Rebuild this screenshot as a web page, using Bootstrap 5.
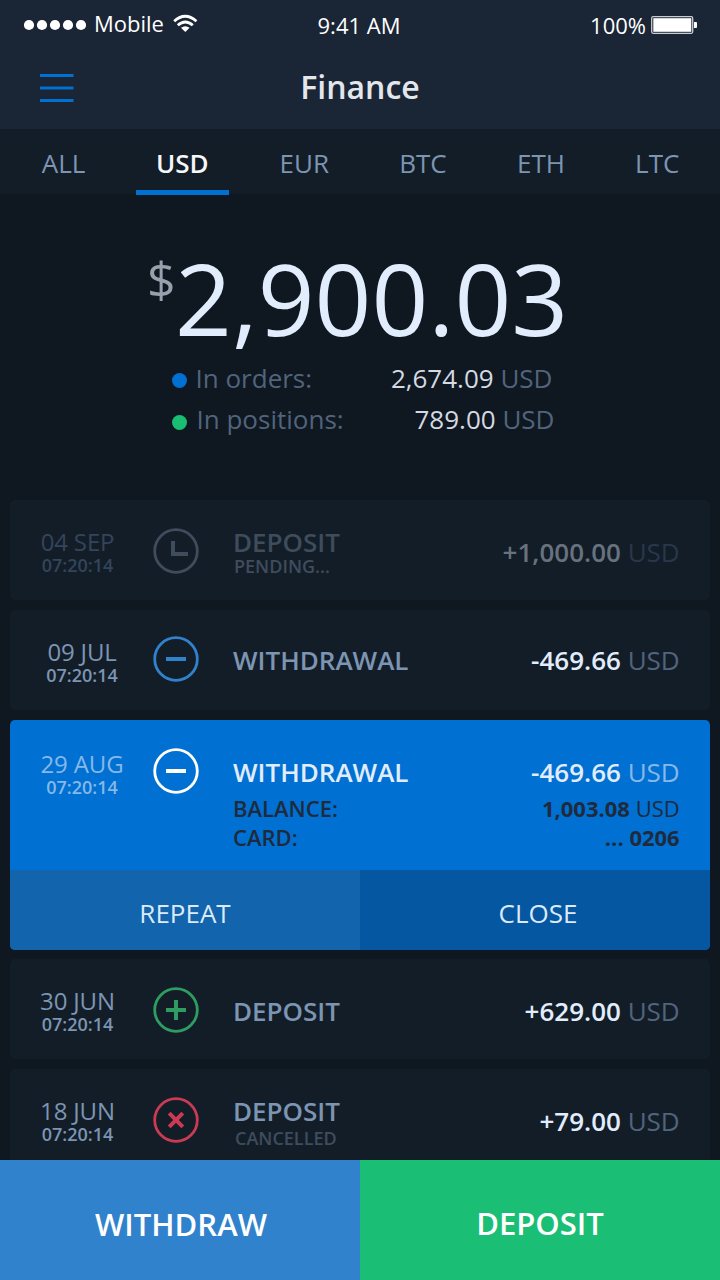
<!DOCTYPE html>
<html lang="en">
<head>
<meta charset="utf-8">
<meta name="viewport" content="width=device-width, initial-scale=1">
<title>Finance</title>
<link href="https://cdn.jsdelivr.net/npm/bootstrap@5.3.0/dist/css/bootstrap.min.css" rel="stylesheet">
<style>
  body { font-family: "Open Sans", sans-serif; background: #0f1720; color: #e1edfc; }
  .screen { width: 720px; height: 1280px; }
  .fw-600 { font-weight: 600; }
  svg { display: block; flex: none; }

  /* header */
  .app-header { background: #1a2535; height: 129px; }
  .status { height: 50px; font-size: 22px; line-height: 30px; color: #fff; padding: 8px 22px 0 24px; }
  .status > div { flex: 1 1 0; }
  .title-bar { height: 79px; padding: 0 40px; }
  .title-bar > * { flex: 1 1 0; }
  .title-bar h1 { font-size: 32px; line-height: 40px; font-weight: 600; color: #e3e7ec; margin: 17px 0 0; }
  .tabs { background: #131d28; height: 65px; padding: 0 40.6px 0 41.8px; font-size: 26px; line-height: 30px; }
  .tabs a { color: #7c95b3; text-decoration: none; padding-top: 19px; position: relative; }
  .tabs a.current { color: #f6f6f6; font-weight: 600; margin: 0 .6px 0 .4px; }
  .tabs a.current::after { content: ""; position: absolute; left: 50%; bottom: -1px; width: 93px; height: 5px; margin-left: -46.2px; background: #0070d2; }

  /* balance */
  .balance { height: 306px; padding-top: 44px; }
  .total { font-size: 99.5px; line-height: 120px; padding-left: 147px; height: 121px; }
  .total sup { font-size: 50px; line-height: 60px; color: #97a1ad; top: 0; margin-top: 11px; width: 28px; }
  .split-row { font-size: 26px; line-height: 38px; height: 42px; padding-left: 172px; color: #51647d; }
  .split-row .label, .split-row .sum { padding-bottom: 4px; }
  .split-row.positions .label, .split-row.positions .sum { padding: 0 0 6px 1px; }
  .split-row .value { color: #d5dae2; }
  .bullet { width: 15px; height: 15px; border-radius: 50%; margin-right: 8.5px; }

  /* transactions */
  .tx-list { height: 660px; padding: 0 10px; gap: 10px; }
  .tx { flex: none; background: #131d28; border-radius: 5px; overflow: hidden; }
  .tx-main { height: 100px; padding: 0 30.3px 0 30px; }
  .tx-when { width: 113px; padding-top: 30px; }
  .tx-when > div { width: 75px; text-align: center; white-space: nowrap; color: #7c95b3; }
  .tx-when.wide > div { width: 84px; }
  .tx-when .day { font-size: 24px; line-height: 24px; letter-spacing: -.15px; }
  .tx-when .time { font-size: 18px; line-height: 18px; font-weight: 600; margin-top: 2px; }
  .tx-icon { width: 46px; height: 46px; margin-top: 28px; }
  .tx-body { margin-left: 34px; padding-top: 37px; font-size: 26px; line-height: 30px; }
  .tx-body .kind { color: #7c95b3; font-weight: 600; }
  .tx-body .amt { color: #e1edfc; font-weight: 600; }
  .tx-body .cur { color: #51647d; font-weight: 400; }
  .tx-body .note { font-size: 18px; line-height: 18px; font-weight: 600; color: #3e4c5c; padding-left: 1px; }
  .with-note { margin-top: -10px; }
  .pending .tx-when > div { color: #33445b; }
  .tx.pending .kind { color: #3e4c5c; }
  .tx.pending .amt { color: #68727e; }
  .tx.pending .cur { color: #29374a; }
  .tx.open { background: #0070d2; }
  .open .tx-main { height: 150px; }
  .open .tx-when { padding-top: 32px; }
  .open .tx-when > div, .open .cur { color: #86b8e9; }
  .open .kind, .open .amt { color: #e1edfc; }
  .extra { font-size: 22px; line-height: 29px; color: #1f2b3c; }
  .tx-action { width: 50%; height: 80px; border: 0; color: #dceafa; font-size: 26px; line-height: 30px; padding: 6px 0 0; }

  /* footer */
  .footer-bar button { width: 50%; height: 120px; border: 0; color: #fff; font-size: 31px; line-height: 40px; font-weight: 600; }
</style>
</head>
<body>
<div class="screen d-flex flex-column overflow-hidden">
  <header class="app-header flex-shrink-0">
    <div class="status d-flex">
      <div class="d-flex">
        <svg width="64" height="34" viewBox="0 0 64 34" fill="#fff"><circle cx="5" cy="17" r="5.1"/><circle cx="18" cy="17" r="5.1"/><circle cx="31" cy="17" r="5.1"/><circle cx="44" cy="17" r="5.1"/><circle cx="57" cy="17" r="5.1"/></svg>
        <span style="margin-left:6px">Mobile</span>
        <svg class="ms-2" width="26" height="34" viewBox="0 0 26 34" fill="none" stroke="#fff" stroke-width="2.8"><path d="M2.2 13.3Q13.2 3.2 24.4 13.3"/><path d="M5.8 17.3Q13.3 10.6 20.8 17.3"/><path d="M13.3 24L9 19.8Q13.3 16.6 17.6 19.8Z" fill="#fff" stroke="none"/></svg>
      </div>
      <div class="text-center"><span class="d-block" style="padding:2px 4px 0 0">9:41 AM</span></div>
      <div class="d-flex justify-content-end">
        <span style="padding-top:2px">100%</span>
        <svg style="margin-left:5px" width="47" height="34" viewBox="0 0 47 34"><rect x=".7" y="8.7" width="41" height="16.6" rx="1.5" fill="none" stroke="#c9cdd3" stroke-width="1.3"/><rect x="2.3" y="10.2" width="38" height="13.6" fill="#fff"/><path d="M43 14h2q1 0 1 1v4q0 1-1 1h-2z" fill="#fff"/></svg>
      </div>
    </div>
    <div class="title-bar d-flex">
      <div><svg width="34" height="79" viewBox="0 0 34 79"><path d="M0 25.5H33.5M0 38H33.5M0 50.5H33.5" stroke="#0070d2" stroke-width="3"/></svg></div>
      <h1 class="text-center">Finance</h1>
      <div></div>
    </div>
  </header>

  <nav class="tabs d-flex justify-content-between flex-shrink-0">
    <a href="#">ALL</a><a href="#" class="current">USD</a><a href="#">EUR</a><a href="#">BTC</a><a href="#">ETH</a><a href="#">LTC</a>
  </nav>

  <section class="balance flex-shrink-0">
    <div class="total d-flex"><sup>$</sup><span>2,900.03</span></div>
    <div class="split-row d-flex align-items-center"><span class="bullet" style="background:#0070d2"></span><span class="label">In orders:</span><span class="sum ms-auto"><span class="value">2,674.09</span> USD</span><span style="width:167.5px"></span></div>
    <div class="split-row positions d-flex align-items-center"><span class="bullet" style="background:#19be73"></span><span class="label">In positions:</span><span class="sum ms-auto"><span class="value">789.00</span> USD</span><span style="width:165.5px"></span></div>
  </section>

  <main class="tx-list d-flex flex-column overflow-hidden flex-shrink-0">
    <article class="tx pending">
      <div class="tx-main d-flex">
        <div class="tx-when"><div class="day">04 SEP</div><div class="time">07:20:14</div></div>
        <svg class="tx-icon" viewBox="0 0 46 46" fill="none" stroke="#3e4c5c"><circle cx="23" cy="23" r="21.3" stroke-width="2.8"/><path d="M20 13V26H35" stroke-width="4"/></svg>
        <div class="tx-body flex-grow-1 d-flex justify-content-between">
          <div class="with-note"><div class="kind">DEPOSIT</div><div class="note">PENDING...</div></div>
          <div class="amt">+1,000.00 <span class="cur">USD</span></div>
        </div>
      </div>
    </article>

    <article class="tx">
      <div class="tx-main d-flex">
        <div class="tx-when wide"><div class="day">09 JUL</div><div class="time">07:20:14</div></div>
        <svg class="tx-icon" style="margin-top:26px" viewBox="0 0 46 46" fill="none" stroke="#2f82cb"><circle cx="23" cy="23" r="21.3" stroke-width="2.8"/><path d="M13 23H33" stroke-width="4"/></svg>
        <div class="tx-body flex-grow-1 d-flex justify-content-between" style="padding-top:35px">
          <div class="kind">WITHDRAWAL</div>
          <div class="amt">-469.66 <span class="cur">USD</span></div>
        </div>
      </div>
    </article>

    <article class="tx open">
      <div class="tx-main d-flex">
        <div class="tx-when wide"><div class="day">29 AUG</div><div class="time">07:20:14</div></div>
        <svg class="tx-icon" viewBox="0 0 46 46" fill="none" stroke="#fff"><circle cx="23" cy="23" r="21.3" stroke-width="2.8"/><path d="M13 23H33" stroke-width="4"/></svg>
        <div class="tx-body flex-grow-1">
          <div class="d-flex justify-content-between"><div class="kind">WITHDRAWAL</div><div class="amt">-469.66 <span class="cur">USD</span></div></div>
          <div class="extra d-flex justify-content-between" style="margin-top:7px"><span class="fw-600">BALANCE:</span><span><b>1,003.08</b> USD</span></div>
          <div class="extra d-flex justify-content-between"><span class="fw-600">CARD:</span><b>... 0206</b></div>
        </div>
      </div>
      <div class="d-flex">
        <button class="tx-action" style="background:#1264ac">REPEAT</button>
        <button class="tx-action" style="background:#0457a0;padding-left:6px">CLOSE</button>
      </div>
    </article>

    <article class="tx" style="margin-top:-1px">
      <div class="tx-main d-flex">
        <div class="tx-when"><div class="day">30 JUN</div><div class="time">07:20:14</div></div>
        <svg class="tx-icon" viewBox="0 0 46 46" fill="none" stroke="#2d9d62"><circle cx="23" cy="23" r="21.3" stroke-width="2.8"/><path d="M13 23H33M23 13V33" stroke-width="4"/></svg>
        <div class="tx-body flex-grow-1 d-flex justify-content-between">
          <div class="kind">DEPOSIT</div>
          <div class="amt">+629.00 <span class="cur">USD</span></div>
        </div>
      </div>
    </article>

    <article class="tx">
      <div class="tx-main d-flex">
        <div class="tx-when"><div class="day">18 JUN</div><div class="time">07:20:14</div></div>
        <svg class="tx-icon" viewBox="0 0 46 46" fill="none" stroke="#c93a55"><circle cx="23" cy="23" r="21.3" stroke-width="2.8"/><path d="M16.2 16.2L29.8 29.8M29.8 16.2L16.2 29.8" stroke-width="4"/></svg>
        <div class="tx-body flex-grow-1 d-flex justify-content-between">
          <div class="with-note"><div class="kind">DEPOSIT</div><div class="note" style="padding:3px 0 0 2px">CANCELLED</div></div>
          <div class="amt">+79.00 <span class="cur">USD</span></div>
        </div>
      </div>
    </article>
  </main>

  <footer class="footer-bar d-flex flex-shrink-0">
    <button style="background:#2f82cb;padding:7px 4px 0 6px">WITHDRAW</button>
    <button style="background:#1abe74;padding:5px 5px 0 5px">DEPOSIT</button>
  </footer>
</div>
<script src="https://cdn.jsdelivr.net/npm/bootstrap@5.3.0/dist/js/bootstrap.bundle.min.js"></script>
</body>
</html>
